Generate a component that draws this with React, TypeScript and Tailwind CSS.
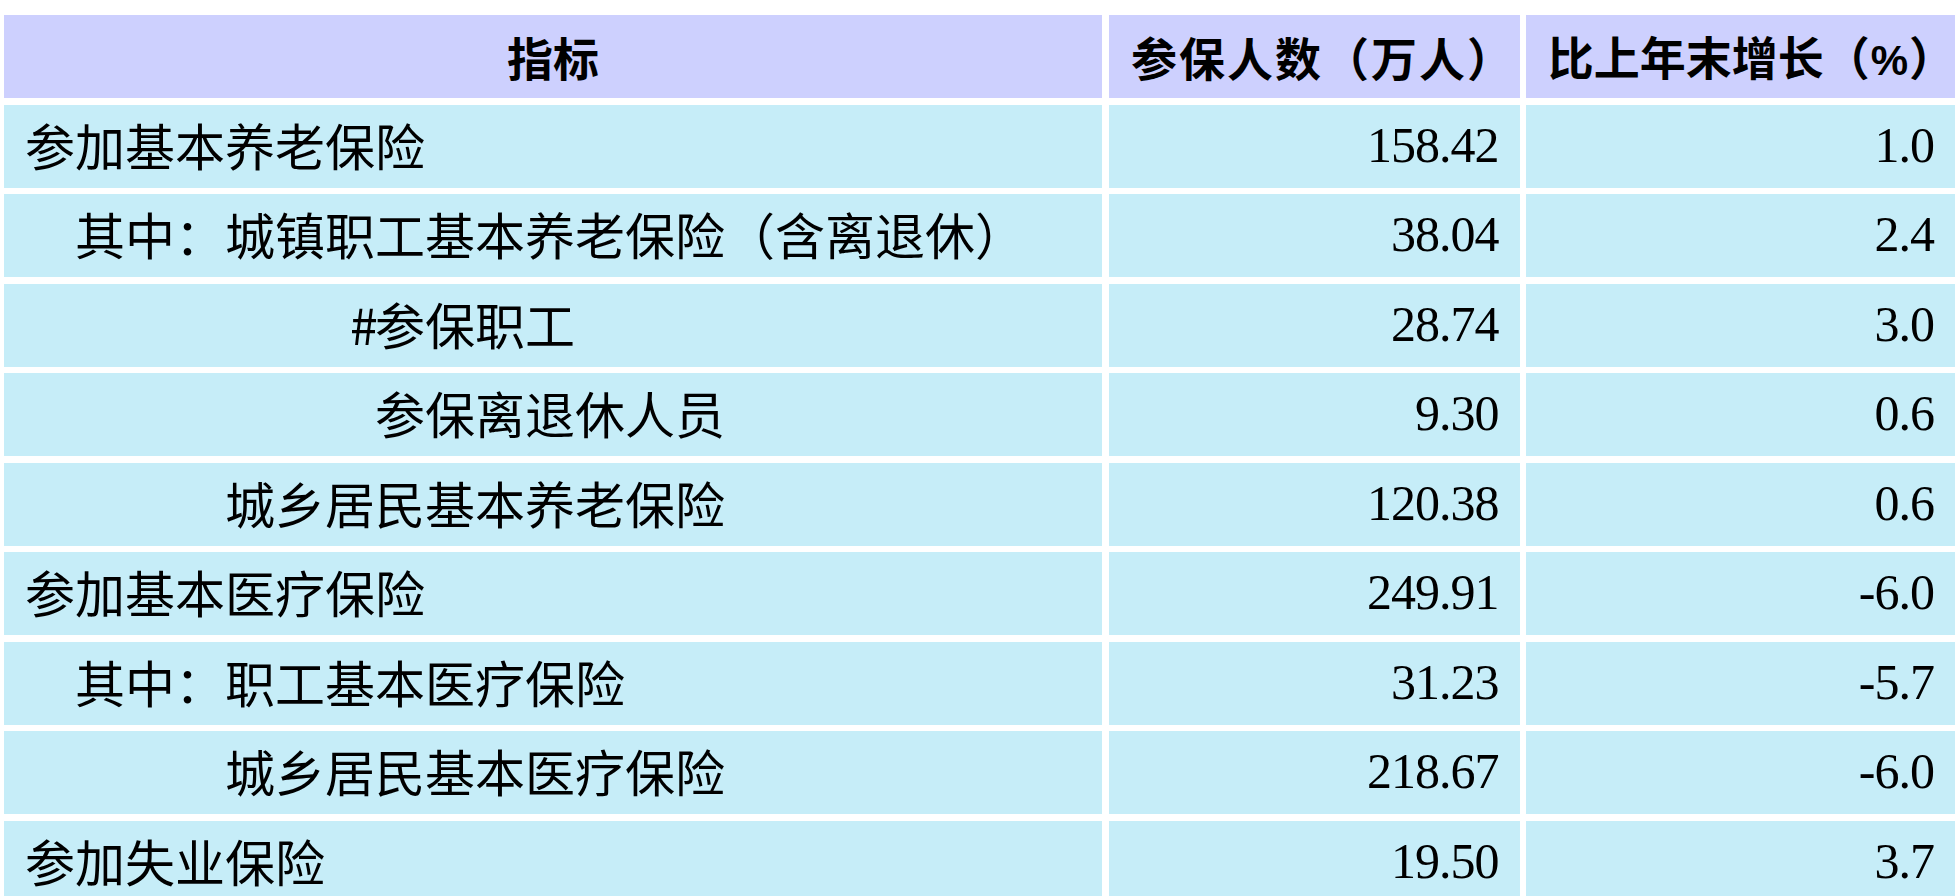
import React from 'react';

interface Row {
    label: string;
    indent: string;
    count: string;
    growth: string;
    hash?: boolean;
}

const rows: Row[] = [
    { label: '参加基本养老保险', indent: 'pl-[21px]', count: '158.42', growth: '1.0' },
    { label: '其中：城镇职工基本养老保险（含离退休）', indent: 'pl-[71px]', count: '38.04', growth: '2.4' },
    { label: '参保职工', indent: 'pl-[346px]', count: '28.74', growth: '3.0', hash: true },
    { label: '参保离退休人员', indent: 'pl-[371px]', count: '9.30', growth: '0.6' },
    { label: '城乡居民基本养老保险', indent: 'pl-[221px]', count: '120.38', growth: '0.6' },
    { label: '参加基本医疗保险', indent: 'pl-[21px]', count: '249.91', growth: '-6.0' },
    { label: '其中：职工基本医疗保险', indent: 'pl-[71px]', count: '31.23', growth: '-5.7' },
    { label: '城乡居民基本医疗保险', indent: 'pl-[221px]', count: '218.67', growth: '-6.0' },
    { label: '参加失业保险', indent: 'pl-[21px]', count: '19.50', growth: '3.7' },
];

const cjk = "font-['Noto_Sans_CJK_SC',sans-serif]";
const num = "font-['Liberation_Serif','Times_New_Roman',serif]";

const App: React.FC = () => {
    return (
        <div className="h-[896px] w-full overflow-hidden bg-white pt-[15px] pl-[4px] text-black">
            <div className="grid grid-cols-[1098px_411px_429px] gap-x-[6.5px] gap-y-[6.5px] auto-rows-[83px]">
                {/* header */}
                <div className={`flex items-center justify-center bg-[#cdd0fe] text-[46px] font-bold ${cjk}`}>
                    <span className="whitespace-nowrap">指标</span>
                </div>
                <div className={`flex items-center justify-center bg-[#cdd0fe] pl-[18px] text-[46px] font-bold tracking-[2px] ${cjk}`}>
                    <span className="whitespace-nowrap">参保人数（万人）</span>
                </div>
                <div className={`flex items-center justify-end bg-[#cdd0fe] text-[46px] font-bold ${cjk}`}>
                    <span className="whitespace-nowrap">
                        比上年末增长（<span className="mx-[1px] font-['Liberation_Sans',sans-serif] text-[42px] font-bold">%</span>）
                    </span>
                </div>

                {rows.map((row) => (
                    <React.Fragment key={row.label + row.count}>
                        <div className={`flex items-center bg-[#c6edf8] pb-[4px] text-[50px] whitespace-nowrap ${cjk} ${row.indent}`}>
                            {row.hash && <span className="inline-block w-[25px]">#</span>}
                            {row.label}
                        </div>
                        <div className={`flex items-center justify-end bg-[#c6edf8] pb-[2px] pr-[21px] text-[50px] tracking-[-1px] ${num}`}>
                            {row.count}
                        </div>
                        <div className={`flex items-center justify-end bg-[#c6edf8] pb-[2px] pr-[21px] text-[50px] tracking-[-1px] ${num}`}>
                            {row.growth}
                        </div>
                    </React.Fragment>
                ))}
            </div>
        </div>
    );
};

export default App;
